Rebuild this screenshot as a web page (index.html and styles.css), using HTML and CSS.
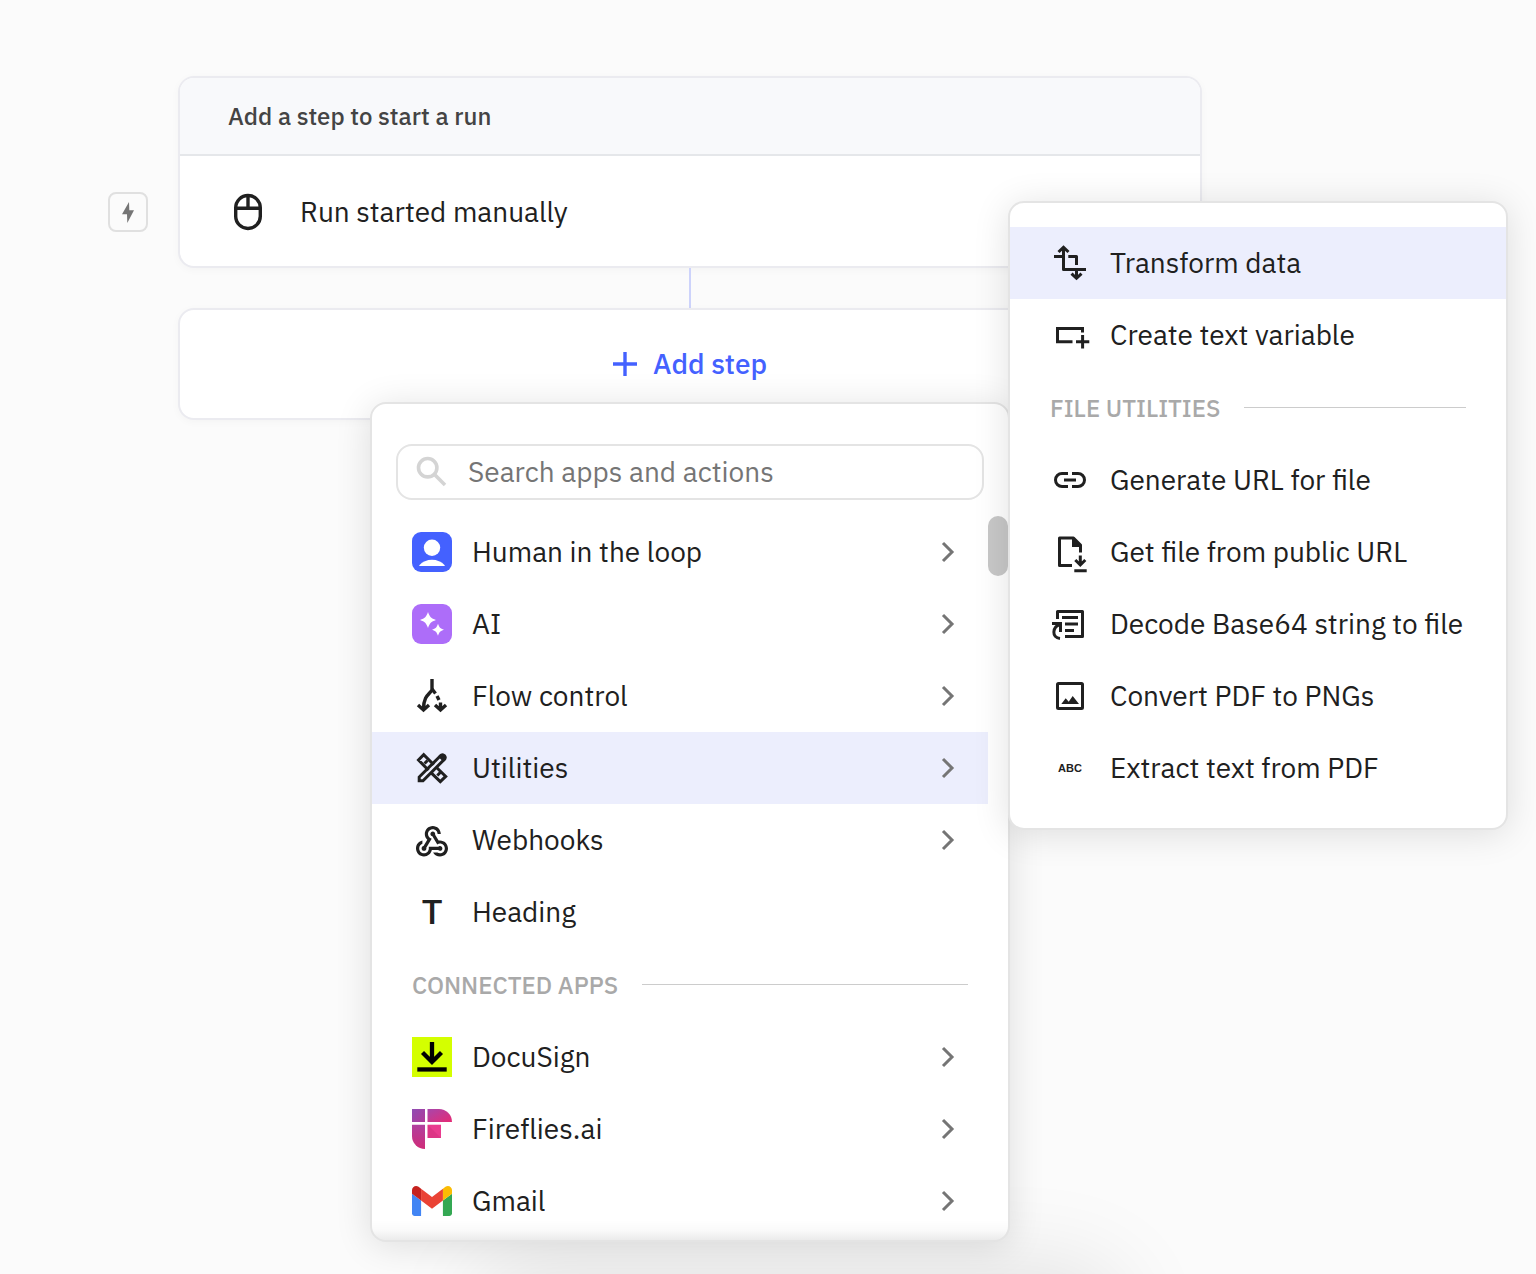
FILE: index.html
```html
<!DOCTYPE html>
<html lang="en">

<head>
    <meta charset="UTF-8">
    <meta name="viewport" content="width=device-width, initial-scale=1.0">
    <title>Workflow editor</title>
    <link rel="stylesheet" href="styles.css">
</head>

<body>
    <main class="flow">
        <div class="trigger-badge">
            <svg viewBox="2 2 36 36"><path d="M21 10 14 22.3H19L19.3 31 26 18.300H21.300z"/></svg>
        </div>
        <section class="card">
            <h2 class="card-title">Add a step to start a run</h2>
            <div class="card-body">
                <svg class="icon" viewBox="0 0 40 40">
                    <g class="line heavy">
                        <rect x="7.7" y="3.5" width="24.6" height="33" rx="12.3"/>
                        <path d="M7.7 16.3H32.3M20 3.5V16.3"/>
                    </g>
                </svg>
                <span>Run started manually</span>
            </div>
        </section>

        <div class="connector"></div>

        <section class="card add-card">
            <button class="add-btn" type="button">
                <svg viewBox="0 0 24 24"><path d="M12 0V24M0 12H24"/></svg>
                <span>Add step</span>
            </button>

            <div class="menu" id="stepMenu">
                <label class="search">
                    <svg class="icon" viewBox="0 0 40 40"><circle cx="15.7" cy="15.7" r="9.2"/><path d="M22.3 22.3 33 33"/></svg>
                    <input type="text" placeholder="Search apps and actions" aria-label="Search apps and actions">
                </label>

                <div class="list">
                    <button class="item" type="button">
                        <svg class="icon" viewBox="0 0 40 40">
                            <rect width="40" height="40" rx="9" fill="#4461ff"/>
                            <circle cx="20" cy="15.8" r="8.2" fill="#fff"/>
                            <path fill="#fff" d="M7.3 34v-.8C10.5 29.6 15 27.7 20 27.7s9.500 1.900 12.700 5.500v.8z"/>
                        </svg>
                        <span>Human in the loop</span>
                        <svg class="chevron" viewBox="0 0 24 24"><path d="M7 3 16 12 7 21"/></svg>
                    </button>
                    <button class="item" type="button">
                        <svg class="icon" viewBox="0 0 40 40">
                            <rect width="40" height="40" rx="9" fill="#ad6df9"/>
                            <path fill="#fff" d="M16 8c1.8 5 3 6.200 8 8-5 1.800-6.200 3-8 8-1.800-5-3-6.200-8-8 5-1.800 6.200-3 8-8zM26 19.700c1.300 3.800 2.200 4.700 6 6-3.800 1.300-4.700 2.200-6 6-1.300-3.800-2.200-4.700-6-6 3.800-1.300 4.700-2.200 6-6z"/>
                        </svg>
                        <span>AI</span>
                        <svg class="chevron" viewBox="0 0 24 24"><path d="M7 3 16 12 7 21"/></svg>
                    </button>
                    <button class="item" type="button">
                        <svg class="icon" viewBox="0 0 40 40">
                            <g class="line heavy">
                                <path d="M20 3V14C18 18 11.5 19.5 11.5 33M6 29 11.5 34 17 29"/>
                                <path d="M20 13 23.5 17.5M25 20 27 24M28.5 26.5V33M23 29 28.5 34 34 29"/>
                            </g>
                        </svg>
                        <span>Flow control</span>
                        <svg class="chevron" viewBox="0 0 24 24"><path d="M7 3 16 12 7 21"/></svg>
                    </button>
                    <button class="item active" type="button">
                        <svg class="icon" viewBox="0 0 40 40">
                            <g class="line">
                                <path d="M16.5 22.3 6.5 12 11.7 6.6 21.8 16.7M24.3 19.2 33.7 28.4 28.3 33.6 18.7 24.4"/>
                                <path d="M12.5 15.5 15.5 12.5M25.3 27.5 28.3 24.5"/>
                                <path d="M7.2 32.8V29L28.5 7.8 32.2 11.5 11 32.8z"/>
                            </g>
                            <path class="solid" d="M26 8.5 28.5 6C31.5 3.2 36.7 8.3 34 11.5L31.5 14z"/>
                        </svg>
                        <span>Utilities</span>
                        <svg class="chevron" viewBox="0 0 24 24"><path d="M7 3 16 12 7 21"/></svg>
                    </button>
                    <button class="item" type="button">
                        <svg class="icon" viewBox="0 0 40 40">
                            <path class="solid" transform="translate(.8 2.8) scale(1.6)" d="M10 15h5.880c.27-.31.67-.5 1.120-.5.83 0 1.500.67 1.500 1.500s-.67 1.500-1.500 1.500c-.44 0-.84-.19-1.120-.5H11.900c-.46 2.280-2.480 4-4.900 4-2.760 0-5-2.240-5-5 0-2.420 1.720-4.440 4-4.900v2.070C4.840 13.580 4 14.700 4 16c0 1.650 1.350 3 3 3s3-1.350 3-3v-1zm2.500-11c1.650 0 3 1.350 3 3h2c0-2.760-2.240-5-5-5s-5 2.240-5 5c0 1.430.6 2.710 1.550 3.620l-2.350 3.900c-.68.14-1.200.75-1.200 1.480 0 .83.67 1.500 1.500 1.500s1.500-.67 1.500-1.500c0-.16-.02-.31-.07-.45l3.380-5.630C10.490 9.610 9.500 8.420 9.500 7c0-1.650 1.350-3 3-3zm4.500 9c-.64 0-1.230.2-1.720.54l-3.050-5.070C11.530 8.350 11 7.740 11 7c0-.83.67-1.500 1.500-1.500S14 6.170 14 7c0 .15-.02.29-.06.43l2.190 3.650c.28-.05.57-.08.87-.08 2.760 0 5 2.240 5 5s-2.240 5-5 5c-1.850 0-3.470-1.010-4.330-2.500h2.670c.48.32 1.050.5 1.660.5 1.650 0 3-1.350 3-3s-1.350-3-3-3z"/>
                        </svg>
                        <span>Webhooks</span>
                        <svg class="chevron" viewBox="0 0 24 24"><path d="M7 3 16 12 7 21"/></svg>
                    </button>
                    <button class="item" type="button">
                        <b class="icon icon-title" aria-hidden="true">T</b>
                        <span>Heading</span>
                    </button>

                    <h3 class="group">Connected apps</h3>

                    <button class="item" type="button">
                        <svg class="icon" viewBox="0 0 40 40">
                            <rect width="40" height="40" fill="#d4ff00"/>
                            <path d="M20 5V25M10.5 15.5 20 25 29.5 15.5" fill="none" stroke="#000" stroke-width="4.3"/>
                            <rect x="5.3" y="30.3" width="29.4" height="4.3"/>
                        </svg>
                        <span>DocuSign</span>
                        <svg class="chevron" viewBox="0 0 24 24"><path d="M7 3 16 12 7 21"/></svg>
                    </button>
                    <button class="item" type="button">
                        <svg class="icon" viewBox="0 0 40 40">
                            <defs>
                                <linearGradient id="ffSquare" x1="0" y1="0" x2="1" y2="1">
                                    <stop offset="0" stop-color="#8f4db4"/>
                                    <stop offset="1" stop-color="#b23a98"/>
                                </linearGradient>
                                <linearGradient id="ffTop" x1="0" y1="0" x2="1" y2="1">
                                    <stop offset="0" stop-color="#a846ab"/>
                                    <stop offset="1" stop-color="#e62a74"/>
                                </linearGradient>
                                <linearGradient id="ffLeft" x1="0" y1="0" x2="0" y2="1">
                                    <stop offset="0" stop-color="#b0409f"/>
                                    <stop offset="1" stop-color="#d02c78"/>
                                </linearGradient>
                            </defs>
                            <path fill="url(#ffSquare)" d="M0 0H13V13H0z"/>
                            <path fill="url(#ffTop)" d="M15.5 0H27A13 13 0 0 1 40 13H15.5z"/>
                            <path fill="url(#ffLeft)" d="M0 15.7H13V40A13 13 0 0 1 0 27z"/>
                            <path fill="#e93c8f" d="M15.7 15.7H29V29H15.7z"/>
                            <path fill="#dd3585" d="M15.7 15.7 29 29H15.7z"/>
                        </svg>
                        <span>Fireflies.ai</span>
                        <svg class="chevron" viewBox="0 0 24 24"><path d="M7 3 16 12 7 21"/></svg>
                    </button>
                    <button class="item" type="button">
                        <svg class="icon" viewBox="52 42 88 66">
                            <path fill="#4285f4" d="M58 108h14V74L52 59v43c0 3.320 2.690 6 6 6"/>
                            <path fill="#34a853" d="M120 108h14c3.320 0 6-2.690 6-6V59l-20 15"/>
                            <path fill="#fbbc04" d="M120 48v26l20-15v-8c0-7.420-8.470-11.650-14.400-7.200"/>
                            <path fill="#ea4335" d="M72 74V48l24 18 24-18v26L96 92"/>
                            <path fill="#c5221f" d="M52 51v8l20 15V48l-5.600-4.200c-5.940-4.450-14.400-.22-14.400 7.200"/>
                        </svg>
                        <span>Gmail</span>
                        <svg class="chevron" viewBox="0 0 24 24"><path d="M7 3 16 12 7 21"/></svg>
                    </button>
                    <div class="scroll-thumb"></div>
                </div>

                <div class="submenu" id="utilitiesMenu">
                    <button class="item active" type="button">
                        <svg class="icon" viewBox="0 0 40 40">
                            <path class="line" stroke-linejoin="round" d="M4 13.5H13.5M13.5 5V26.5H36M18.3 13.5H26.5V22M26.5 26.5V35"/>
                            <path class="line" d="M8.5 9 13.5 4.300 18.500 9M21.500 30.700 26.500 35.300 31.500 30.700"/>
                        </svg>
                        <span>Transform data</span>
                    </button>
                    <button class="item" type="button">
                        <svg class="icon" viewBox="0 0 40 40">
                            <path class="line" d="M32.5 17.5V13.5H7.5V26.7H22.5M26 26.7H39.3M32.6 20V33.5"/>
                        </svg>
                        <span>Create text variable</span>
                    </button>

                    <h3 class="group">File utilities</h3>

                    <button class="item" type="button">
                        <svg class="icon" viewBox="0 0 40 40">
                            <path class="line" d="M18 13.5H12a6.5 6.5 0 0 0 0 13H18M22 13.5H28a6.5 6.5 0 0 1 0 13H22M14 20H26"/>
                        </svg>
                        <span>Generate URL for file</span>
                    </button>
                    <button class="item" type="button">
                        <svg class="icon" viewBox="0 0 40 40">
                            <path class="line" stroke-linejoin="round" d="M22 33.5H9.5V6H23.5L30.5 13V20.5"/>
                            <path class="line" d="M30.3 23.5V32M25.3 28 30.3 33 35.3 28M24.3 38.7H36.7"/>
                            <path class="solid" d="M22 5 32 15H22z"/>
                        </svg>
                        <span>Get file from public URL</span>
                    </button>
                    <button class="item" type="button">
                        <svg class="icon" viewBox="0 0 40 40">
                            <path class="line" stroke-linejoin="round" d="M7.5 15V7.5H32.5V32.5H15"/>
                            <path class="line" d="M12 13.5H28M15 20H28M15 26.5H24M2 19.5H10.5V28M10.5 20C2 23 1.5 33.5 10 34.5"/>
                        </svg>
                        <span>Decode Base64 string to file</span>
                    </button>
                    <button class="item" type="button">
                        <svg class="icon" viewBox="0 0 40 40">
                            <rect class="line" x="7.5" y="7.5" width="25" height="25" rx="1"/>
                            <path class="solid" d="M11.3 28 15.7 22.3 18.7 25.7 22.7 20 29 28z"/>
                        </svg>
                        <span>Convert PDF to PNGs</span>
                    </button>
                    <button class="item" type="button">
                        <b class="icon icon-abc" aria-hidden="true">ABC</b>
                        <span>Extract text from PDF</span>
                    </button>
                </div>
            </div>
        </section>
    </main>
</body>

</html>
```
FILE: styles.css
```css
* {
    margin: 0;
    padding: 0;
    box-sizing: border-box;
}

body {
    background: #fbfbfb;
    color: #202020;
    font-family: "IBM Plex Sans", Roboto, "Liberation Sans", sans-serif;
    font-size: 28px;
    line-height: 40px;
}

button,
input {
    font: inherit;
    color: inherit;
    background: none;
    border: none;
}

button {
    cursor: pointer;
}

.flow {
    position: relative;
    display: grid;
    grid-template-columns: 40px 1fr;
    column-gap: 30px;
    align-content: start;
    min-height: 100vh;
    padding: 76px 334px 0 108px;
    overflow: hidden;
}

/* shadow of the panel docked below the canvas */
.flow::after {
    content: "";
    position: absolute;
    bottom: -80px;
    left: 500px;
    right: 440px;
    height: 60px;
    border-radius: 30px;
    box-shadow: 0 0 90px 30px rgba(0, 0, 0, 0.1);
}

.trigger-badge {
    align-self: end;
    width: 40px;
    height: 40px;
    margin-bottom: 36px;
    border: 2px solid #e0e0e0;
    border-radius: 8px;
}

.trigger-badge svg {
    display: block;
    fill: #757575;
}

.card {
    grid-column: 2;
    background: #fff;
    border: 2px solid #ebebf0;
    border-radius: 16px;
    box-shadow: 0 2px 8px rgba(0, 0, 0, 0.03);
}

.card-title {
    padding: 18px 48px;
    background: #f8f9fb;
    border-bottom: 2px solid #e5e7ea;
    border-radius: 14px 14px 0 0;
    color: #444;
    font-size: 24px;
    font-weight: 500;
}

.card-body {
    display: flex;
    align-items: center;
    gap: 32px;
    padding: 36px 48px 34px;
}

.connector {
    grid-column: 2;
    justify-self: center;
    width: 2px;
    height: 40px;
    background: #cdd3fb;
}

.add-card {
    position: relative;
}

.add-btn {
    display: flex;
    justify-content: center;
    align-items: center;
    gap: 16px;
    width: 100%;
    padding: 34px 0;
    color: #4461ff;
    font-weight: 500;
}

.add-btn svg {
    width: 24px;
    height: 24px;
    stroke: currentColor;
    stroke-width: 3.4;
}

.icon {
    flex: none;
    display: block;
    width: 40px;
    height: 40px;
    overflow: visible;
}

.icon .line {
    fill: none;
    stroke: #202020;
    stroke-width: 3;
}

.icon .heavy {
    stroke-width: 3.4;
}

.icon .solid {
    fill: #202020;
}

.icon-title {
    font-family: Roboto, "Liberation Sans", sans-serif;
    font-size: 34px;
    font-weight: 500;
    text-align: center;
}

.icon-abc {
    font-family: "Liberation Sans", sans-serif;
    font-size: 11px;
    text-align: center;
}

.menu,
.submenu {
    position: absolute;
    background: #fff;
    border: 2px solid #e4e4e4;
    border-radius: 16px;
    box-shadow: 0 4px 36px rgba(0, 0, 0, 0.12);
}

.menu {
    top: 92px;
    left: 50%;
    width: 640px;
    margin-left: -320px;
    padding-top: 40px;
    z-index: 1;
}

.submenu {
    top: -203px;
    left: 100%;
    width: 500px;
    padding: 24px 0;
}

.search {
    display: flex;
    align-items: center;
    gap: 16px;
    height: 56px;
    margin: 0 24px 16px;
    padding: 0 14px;
    border: 2px solid #e4e4e4;
    border-radius: 16px;
}

.search svg {
    fill: none;
    stroke: #d4d4d4;
    stroke-width: 3.6;
}

.search input {
    flex: 1;
    min-width: 0;
    outline: none;
}

.search input::placeholder {
    color: #757575;
    opacity: 1;
}

.list {
    position: relative;
    padding: 0 20px 3px 0;
}

/* fade over the cut-off end of the list */
.list::after {
    content: "";
    position: absolute;
    left: 0;
    right: 0;
    bottom: 0;
    height: 20px;
    border-radius: 0 0 14px 14px;
    background: linear-gradient(rgba(0, 0, 0, 0), rgba(0, 0, 0, 0.02) 50%, rgba(0, 0, 0, 0.08));
}

.item {
    display: flex;
    align-items: center;
    gap: 20px;
    width: 100%;
    height: 72px;
    padding: 0 28px 0 40px;
    text-align: left;
    white-space: nowrap;
}

.item:hover,
.item.active {
    background: #eceefd;
}

.chevron {
    flex: none;
    width: 24px;
    height: 24px;
    margin-left: auto;
    fill: none;
    stroke: #757575;
    stroke-width: 3;
}

.group {
    display: flex;
    align-items: center;
    gap: 24px;
    height: 73px;
    padding: 0 20px 0 40px;
    color: #a9a9a9;
    font-size: 24px;
    font-weight: 500;
    text-transform: uppercase;
    white-space: nowrap;
}

.submenu .group {
    padding-right: 40px;
}

.group::after {
    content: "";
    flex: 1;
    height: 1px;
    background: #ccc;
}

.scroll-thumb {
    position: absolute;
    top: 0;
    right: 0;
    width: 20px;
    height: 60px;
    border-radius: 10px;
    background: #c8c8c8;
}
```
